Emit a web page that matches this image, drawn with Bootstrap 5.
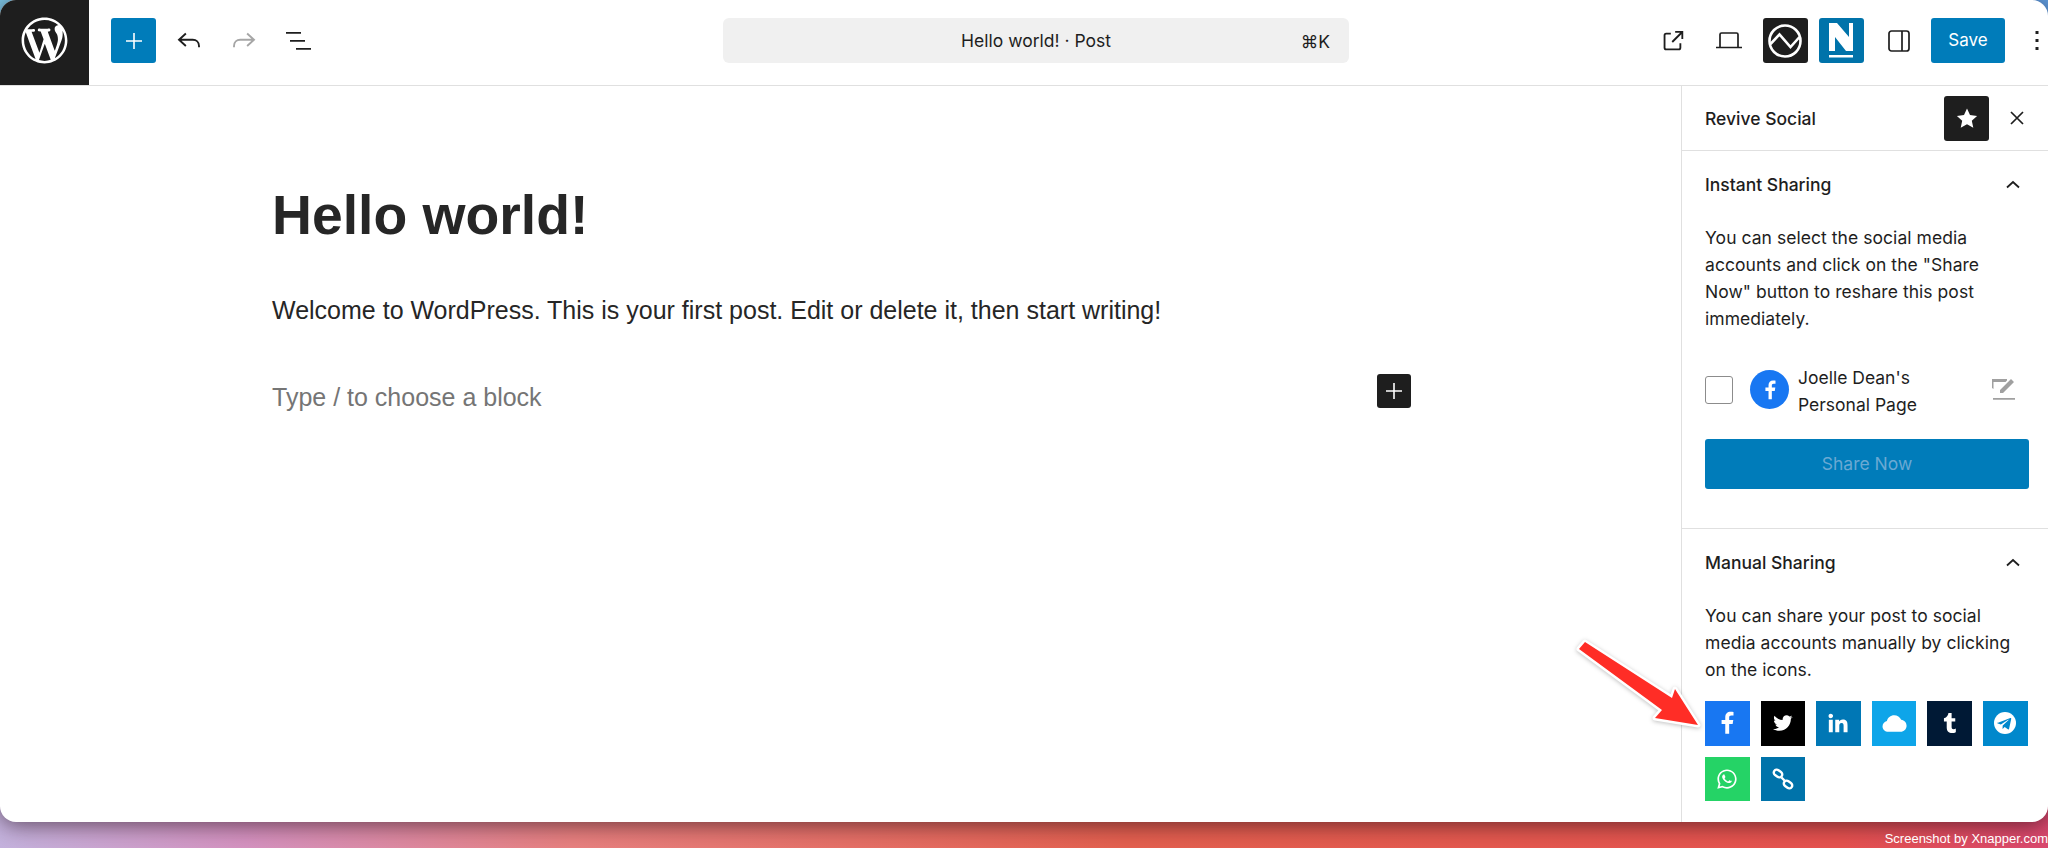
<!DOCTYPE html>
<html lang="en">
<head>
<meta charset="UTF-8">
<meta name="viewport" content="width=device-width, initial-scale=1.0">
<title>Hello world! - Post</title>
<link rel="stylesheet" href="https://cdn.jsdelivr.net/npm/bootstrap@5.3.0/dist/css/bootstrap.min.css">
<style>
    html, body { height: 848px; overflow: hidden; }
    body {
        font-family: "Inter", "Liberation Sans", sans-serif;
        color: #1e1e1e;
        background: linear-gradient(90deg, #c4b2dd 0%, #d592c0 12%, #e8807f 28%, #e4604f 55%, #e6524f 90%, #d9486e 100%);
        position: relative;
    }
    .corner-tl, .corner-tr { position: absolute; top: 0; width: 60px; height: 60px; }
    .corner-tl { left: 0; background: #7cc6e6; }
    .corner-tr { right: 0; background: #5f9fe2; }
    .wp-window {
        position: relative;
        height: 822px;
        background: #fff;
        border-radius: 16px;
        overflow: hidden;
        box-shadow: 0 3px 22px rgba(30, 10, 20, .6);
    }
    .wp-topbar { height: 86px; border-bottom: 1px solid #e0e0e0; }
    .wp-logo { width: 89px; height: 85px; background: #1e1e1e; padding-bottom: 5px; }
    .bar-slot { height: 81px; }
    .tool-left { padding-left: 22px; width: 634px; gap: 10px; }
    .tool-btn { width: 45px; height: 45px; border-radius: 3px; }
    .bg-wp { background: #007cba; }
    .bg-wp-alt { background: #0073aa; }
    .bg-wp-dark { background: #1e1e1e; }
    .cmd-bar {
        width: 626px; height: 45px; background: #f0f0f0; border-radius: 6px;
        font-size: 17.5px; position: relative; padding-top: 1px;
    }
    .cmd-key { position: absolute; right: 19px; top: 11px; }
    .tool-right { gap: 11px; }
    .tool-side { margin-left: 1.500px; }
    .save-btn { width: 74px; height: 45px; border-radius: 3px; background: #007cba; color: #fff; font-size: 17px; border: 0; padding: 0; margin-left: -1px; }
    .tool-more { width: 32px; height: 45px; margin-left: 5px; margin-right: -5px; }
    .wp-editor { padding-left: 272px; width: 1681px; position: relative; font-family: "Liberation Sans", Arial, sans-serif; }
    .post-title { font-family: inherit; font-weight: 700; font-size: 55.300px; line-height: 1.2; margin: 0; padding-top: 96px; color: #262626; }
    .post-body { font-size: 25px; line-height: 1.4; margin: 0; padding-top: 45px; color: #262626; }
    .post-hint { font-size: 25px; line-height: 1.4; margin: 0; padding-top: 52px; color: #757575; }
    .block-add { position: absolute; left: 1377px; top: 288px; width: 34px; height: 34px; border-radius: 3px; background: #1e1e1e; }
    .wp-side { width: 367px; border-left: 1px solid #e0e0e0; font-size: 17.5px; }
    .side-head { height: 65px; border-bottom: 1px solid #e0e0e0; padding: 0 15px 0 23px; }
    .side-title { font-weight: 500; padding-top: 3px; }
    .star-btn { width: 45px; height: 45px; border-radius: 3px; background: #1e1e1e; }
    .side-panel { border-bottom: 1px solid #e0e0e0; padding: 0 19px 0 23px; }
    .panel-one { height: 378px; }
    .panel-head { height: 68px; font-weight: 500; }
    .panel-chev { margin-right: 4px; }
    .panel-text { line-height: 27px; margin: 5px 0 0; max-width: 312px; letter-spacing: .05px; }
    .acct-row { padding-top: 38px; height: 107px; }
    .acct-check { height: 39px; }
    .acct-box { width: 28px; height: 28px; border: 1px solid #8c8c8c; border-radius: 3px; background: #fff; }
    .acct-fb { width: 39px; height: 39px; border-radius: 50%; background: #1877f2; margin-left: 17px; }
    .acct-name { line-height: 27px; margin: -6px 0 0 9px; }
    .acct-edit { margin: 7px 14px 0 auto; }
    .share-now { height: 50px; width: 324px; background: #007cba; border-radius: 3px; color: #6aa9d3; }
    .share-grid { display: flex; flex-wrap: wrap; gap: 11px; padding-top: 18px; }
    .share-ico { width: 44.600px; height: 44.600px; }
    .ico-fb { background: #1877f2; }
    .ico-tw { background: #000; }
    .ico-li { background: #0077b5; }
    .ico-cl { background: #0ea5e9; }
    .ico-tu { background: #001935; }
    .ico-te { background: #0088cc; }
    .ico-wa { background: #25d366; }
    .ico-ln { background: #0073aa; }
    .shot-note { position: absolute; right: 0; bottom: 1px; color: #fff; font-family: "Liberation Sans", sans-serif; font-size: 13px; line-height: 17px; }
    .red-arrow { position: absolute; left: 1570px; top: 635px; filter: drop-shadow(0 1px 2px rgba(0,0,0,.25)); }
    .red-arrow path { paint-order: stroke; }
</style>
</head>
<body>
<div class="corner-tl"></div>
<div class="corner-tr"></div>

<div class="wp-window d-flex flex-column">
    <div class="wp-topbar d-flex align-items-start">
        <div class="wp-logo d-flex align-items-center justify-content-center flex-shrink-0">
            <svg width="55" height="55" viewBox="-2 -2 24 24" fill="#fff"><path d="M20 10c0-5.510-4.490-10-10-10C4.480 0 0 4.490 0 10c0 5.520 4.480 10 10 10 5.510 0 10-4.480 10-10zM7.780 15.370L4.370 6.220c.55-.02 1.170-.08 1.170-.08.50-.06.44-1.130-.06-1.110 0 0-1.450.11-2.370.11-.18 0-.37 0-.58-.01C4.120 2.690 6.910 1.030 10 1.030c2.340 0 4.460.85 6.060 2.340-.68-.11-1.650.39-1.650 1.580 0 .74.45 1.360.90 2.100.35.61.55 1.360.55 2.460 0 1.490-1.400 5-1.400 5l-3.030-8.370c.54-.02.82-.17.82-.17.50-.05.44-1.250-.06-1.220 0 0-1.440.12-2.380.12-.87 0-2.330-.12-2.330-.12-.50-.03-.56 1.200-.06 1.220l.92.080 1.260 3.410zM17.410 10c.24-.64.74-1.870.43-4.250.70 1.290 1.050 2.710 1.050 4.250 0 3.290-1.730 6.240-4.400 7.780.97-2.590 1.940-5.200 2.920-7.780zM6.100 18.090C3.120 16.650 1.110 13.530 1.110 10c0-1.300.23-2.480.72-3.590C3.250 10.300 4.670 14.200 6.100 18.090zm4.030-6.630l2.580 6.980c-.83.30-1.720.46-2.710.46-.82 0-1.630-.11-2.410-.35.84-2.380 1.700-4.730 2.540-7.090z"/></svg>
        </div>
        <div class="tool-left bar-slot d-flex align-items-center flex-shrink-0">
            <div class="tool-btn bg-wp d-flex align-items-center justify-content-center">
                <svg width="24" height="24" viewBox="0 0 24 24" fill="#fff"><path d="M11.200 4h1.600v7.200H20v1.600h-7.200V20h-1.600v-7.200H4v-1.600h7.200z"/></svg>
            </div>
            <div class="tool-btn d-flex align-items-center justify-content-center">
                <svg width="30" height="30" viewBox="0 0 24 24" fill="none" stroke="#1e1e1e" stroke-width="1.500"><path d="M9.500 6L4 11l5.500 5M4 11h11c2.800 0 5 1.800 5 5v1"/></svg>
            </div>
            <div class="tool-btn d-flex align-items-center justify-content-center">
                <svg width="30" height="30" viewBox="0 0 24 24" fill="none" stroke="#a6a6a6" stroke-width="1.500"><path d="M14.500 6L20 11l-5.500 5M20 11H9c-2.800 0-5 1.800-5 5v1"/></svg>
            </div>
            <div class="tool-btn d-flex align-items-center justify-content-center">
                <svg width="26" height="24" viewBox="0 0 26 24" fill="#1e1e1e"><path d="M0 3h15v1.700H0zM4 11h15v1.700H4zM10 19h15v1.700H10z"/></svg>
            </div>
        </div>
        <div class="bar-slot d-flex align-items-center flex-shrink-0">
            <div class="cmd-bar d-flex align-items-center justify-content-center">
                <span>Hello world! · Post</span>
                <span class="cmd-key">⌘K</span>
            </div>
        </div>
        <div class="tool-right bar-slot d-flex align-items-center ms-auto">
            <div class="tool-btn d-flex align-items-center justify-content-center">
                <svg width="26" height="26" viewBox="0 0 24 24" fill="none" stroke="#1e1e1e" stroke-width="1.700"><path d="M18.800 14v4.300c0 .8-.6 1.500-1.500 1.500H5.700c-.8 0-1.500-.7-1.500-1.500V6.700c0-.8.7-1.500 1.500-1.500H10M14 3.600h6.600v6.600M20.300 3.900l-9 9"/></svg>
            </div>
            <div class="tool-btn d-flex align-items-center justify-content-center">
                <svg width="28" height="24" viewBox="0 0 28 24" fill="none" stroke="#1e1e1e" stroke-width="1.700"><path d="M5 18V5.500c0-.8.7-1.500 1.500-1.500h15c.8 0 1.500.7 1.500 1.500V18M1 18.500h26"/></svg>
            </div>
            <div class="tool-btn bg-wp-dark d-flex align-items-center justify-content-center">
                <svg width="36" height="36" viewBox="0 0 36 36" fill="none" stroke="#fff" stroke-width="2.600"><circle cx="18" cy="18" r="15.500"/><path d="M3.500 21L12.500 11.500l11 12.500 9-10"/></svg>
            </div>
            <div class="tool-btn bg-wp-alt d-flex align-items-center justify-content-center">
                <svg width="32" height="38" viewBox="0 0 32 38" fill="#fff"><path d="M4 1h8l12 14V1h4v28h-7L10 15v14H4zM4 33h24v2.500H4z"/></svg>
            </div>
            <div class="tool-btn tool-side d-flex align-items-center justify-content-center">
                <svg width="24" height="24" viewBox="0 0 24 24" fill="none" stroke="#1e1e1e" stroke-width="1.700"><rect x="2" y="2" width="20" height="20" rx="2.500"/><path d="M15 2v20"/></svg>
            </div>
            <button class="save-btn btn">Save</button>
            <div class="tool-more d-flex align-items-center justify-content-center">
                <svg width="4" height="20" viewBox="0 0 4 20" fill="#1e1e1e"><rect x="0.500" width="3" height="3"/><rect x="0.500" y="8" width="3" height="3"/><rect x="0.500" y="16" width="3" height="3"/></svg>
            </div>
        </div>
    </div>

    <div class="d-flex flex-grow-1">
        <div class="wp-editor">
            <h1 class="post-title">Hello world!</h1>
            <p class="post-body">Welcome to WordPress. This is your first post. Edit or delete it, then start writing!</p>
            <p class="post-hint">Type / to choose a block</p>
            <div class="block-add d-flex align-items-center justify-content-center">
                <svg width="24" height="24" viewBox="0 0 24 24" fill="#fff"><path d="M11.200 4h1.600v7.200H20v1.600h-7.200V20h-1.600v-7.200H4v-1.600h7.200z"/></svg>
            </div>
        </div>

        <div class="wp-side flex-grow-1">
            <div class="side-head d-flex align-items-center justify-content-between">
                <span class="side-title">Revive Social</span>
                <div class="d-flex align-items-center gap-3">
                    <div class="star-btn d-flex align-items-center justify-content-center">
                        <svg width="24" height="24" viewBox="0 0 24 24" fill="#fff"><path d="M12 2.500l3 6.600 7.100.8-5.300 4.800 1.500 7.100-6.300-3.600-6.300 3.600 1.500-7.100L1.900 9.900 9 9.100z"/></svg>
                    </div>
                    <svg class="me-1" width="24" height="24" viewBox="0 0 24 24" fill="none" stroke="#1e1e1e" stroke-width="1.700"><path d="M6 6l12 12M18 6L6 18"/></svg>
                </div>
            </div>

            <div class="side-panel panel-one">
                <div class="panel-head d-flex align-items-center justify-content-between">
                    <span>Instant Sharing</span>
                    <svg class="panel-chev" width="24" height="24" viewBox="0 0 24 24" fill="none" stroke="#1e1e1e" stroke-width="1.800"><path d="M6 14.500l6-5.500 6 5.500"/></svg>
                </div>
                <p class="panel-text">You can select the social media accounts and click on the "Share Now" button to reshare this post immediately.</p>
                <div class="acct-row d-flex align-items-start">
                    <div class="acct-check d-flex align-items-center"><div class="acct-box"></div></div>
                    <div class="acct-fb d-flex align-items-center justify-content-center">
                        <svg width="22" height="22" viewBox="0 0 24 24" fill="#fff"><path d="M14 22v-9h3.200l.6-3.800H14V7c0-1.100.4-1.900 2-1.900h2V1.800C17.600 1.700 16.500 1.600 15.300 1.600c-2.900 0-4.900 1.800-4.900 5V9.200H7V13h3.400v9z"/></svg>
                    </div>
                    <div class="acct-name">Joelle Dean's<br>Personal Page</div>
                    <svg class="acct-edit" width="24" height="24" viewBox="0 0 24 24" fill="#a0a0a0"><path d="M1 2h15v1.500l-1.500 1.500H2.500v7L1 11zM20 2l3 3-11 11H9v-3zM2 21h22v1.800H2z"/></svg>
                </div>
                <div class="share-now d-flex align-items-center justify-content-center">Share Now</div>
            </div>

            <div class="side-panel border-0">
                <div class="panel-head d-flex align-items-center justify-content-between">
                    <span>Manual Sharing</span>
                    <svg class="panel-chev" width="24" height="24" viewBox="0 0 24 24" fill="none" stroke="#1e1e1e" stroke-width="1.800"><path d="M6 14.500l6-5.500 6 5.500"/></svg>
                </div>
                <p class="panel-text">You can share your post to social media accounts manually by clicking on the icons.</p>
                <div class="share-grid">
                    <div class="share-ico ico-fb d-flex align-items-center justify-content-center">
                        <svg width="26" height="26" viewBox="0 0 24 24" fill="#fff"><path d="M14 22v-9h3.200l.6-3.800H14V7c0-1.100.4-1.900 2-1.900h2V1.800C17.600 1.700 16.500 1.600 15.300 1.600c-2.900 0-4.900 1.800-4.900 5V9.200H7V13h3.400v9z"/></svg>
                    </div>
                    <div class="share-ico ico-tw d-flex align-items-center justify-content-center">
                        <svg width="20" height="20" viewBox="0 0 24 24" fill="#fff"><path d="M23.500 4.800c-.9.400-1.800.7-2.800.8 1-.6 1.800-1.500 2.100-2.700-.9.600-2 1-3.100 1.200-1.800-1.900-4.800-2-6.700-.2-1.200 1.200-1.700 2.900-1.400 4.500C7.800 8.200 4.200 6.300 1.800 3.300.5 5.500 1.200 8.300 3.300 9.700c-.8 0-1.500-.2-2.200-.6 0 2.300 1.600 4.300 3.800 4.700-.7.200-1.400.2-2.100.1.600 1.900 2.400 3.300 4.400 3.300-1.700 1.300-3.800 2.100-6 2.100-.4 0-.8 0-1.200-.1 2.200 1.400 4.800 2.200 7.500 2.200 9 0 13.900-7.500 13.900-13.900v-.6c1-.7 1.800-1.500 2.300-2.100z"/></svg>
                    </div>
                    <div class="share-ico ico-li d-flex align-items-center justify-content-center">
                        <svg width="22" height="22" viewBox="0 0 24 24" fill="#fff"><path d="M2 8.500h4.300V22H2zM4.100 2c1.400 0 2.500 1.100 2.500 2.400S5.500 6.900 4.100 6.900 1.700 5.800 1.700 4.400 2.800 2 4.100 2zM9 8.500h4.100v1.900c.6-1.100 2-2.200 4.100-2.200 4.400 0 5.200 2.800 5.200 6.500V22h-4.300v-6.500c0-1.600 0-3.500-2.200-3.500s-2.500 1.700-2.500 3.400V22H9z"/></svg>
                    </div>
                    <div class="share-ico ico-cl d-flex align-items-center justify-content-center">
                        <svg width="25" height="25" viewBox="0 0 24 24" fill="#fff"><path d="M6 20c-3 0-5.500-2.300-5.500-5.200 0-2.500 1.800-4.600 4.200-5.100C5.300 6.400 8.200 4 11.700 4c3 0 5.600 1.800 6.700 4.400 3 .3 5.200 2.800 5.200 5.800 0 3.200-2.600 5.800-5.800 5.800z"/></svg>
                    </div>
                    <div class="share-ico ico-tu d-flex align-items-center justify-content-center">
                        <svg width="23" height="23" viewBox="0 0 24 24" fill="#fff"><path d="M14.600 22c-3.200 0-5.500-1.700-5.500-5.700V10H6.200V6.600C9.400 5.800 10.700 3 10.900 1h3.300v5.400H18V10h-3.800v5.600c0 1.700.8 2.300 2.100 2.300.9 0 1.800-.3 2.300-.6V21c-.8.500-2.400 1-4 1z"/></svg>
                    </div>
                    <div class="share-ico ico-te d-flex align-items-center justify-content-center">
                        <svg width="24" height="24" viewBox="0 0 24 24"><circle cx="12" cy="12" r="11" fill="#fff"/><path fill="#0088cc" d="M5 11.800l12.300-4.800c.6-.2 1.100.1.900 1l-2.100 9.800c-.2.700-.6.900-1.200.5l-3.200-2.400-1.600 1.500c-.2.200-.3.300-.6.300l.2-3.300 5.900-5.400c.3-.2-.1-.4-.4-.2l-7.300 4.600-3.100-1c-.7-.2-.7-.7.200-1z"/></svg>
                    </div>
                    <div class="share-ico ico-wa d-flex align-items-center justify-content-center">
                        <svg width="22" height="22" viewBox="0 0 24 24" fill="#fff"><path d="M12 1.500C6.200 1.500 1.500 6.200 1.500 12c0 1.900.5 3.700 1.400 5.300L1.400 22.600l5.400-1.400c1.600.8 3.300 1.300 5.200 1.300 5.800 0 10.500-4.700 10.500-10.500S17.800 1.500 12 1.500zm0 19.200c-1.600 0-3.100-.4-4.500-1.200l-.3-.2-3.200.8.900-3.100-.2-.3c-.9-1.400-1.300-3-1.300-4.700C3.400 7.200 7.200 3.300 12 3.300s8.700 3.900 8.700 8.700-3.900 8.700-8.700 8.700zm4.700-6.500c-.3-.1-1.500-.8-1.800-.9-.2-.1-.4-.1-.6.200s-.7.900-.8 1c-.2.200-.3.200-.6.100-1.500-.8-2.500-1.400-3.500-3.100-.3-.5.300-.4.800-1.500.1-.2 0-.3 0-.5-.1-.1-.6-1.400-.8-1.900-.2-.5-.4-.4-.6-.4h-.5c-.2 0-.5.100-.7.300-.8.800-1.100 1.900-.7 3.100.7 2 2.600 4.300 5.300 5.400 1.700.7 3 .6 3.900-.1.500-.4 1-1 1-1.300.1-.3.100-.6 0-.7 0-.1-.2-.1-.4-.2z"/></svg>
                    </div>
                    <div class="share-ico ico-ln d-flex align-items-center justify-content-center">
                        <svg width="24" height="24" viewBox="0 0 24 24" fill="none" stroke="#fff" stroke-width="2.400"><rect x="2.500" y="3.500" width="9" height="6" rx="3" transform="rotate(35 7 6.500)"/><rect x="12.500" y="14.500" width="9" height="6" rx="3" transform="rotate(35 17 17.500)"/><path d="M10.500 10.500l3 3"/></svg>
                    </div>
                </div>
            </div>
        </div>
    </div>
</div>

<svg class="red-arrow" width="140" height="105" viewBox="0 0 140 105">
    <path d="M9 14L15 7 102 63 105 54 128 90 85 83 92 75z" fill="#ff2d26" stroke="#fff" stroke-width="5" stroke-linejoin="round"/>
</svg>
<div class="shot-note">Screenshot by Xnapper.com</div>

<script src="https://cdn.jsdelivr.net/npm/bootstrap@5.3.0/dist/js/bootstrap.bundle.min.js"></script>
</body>
</html>
